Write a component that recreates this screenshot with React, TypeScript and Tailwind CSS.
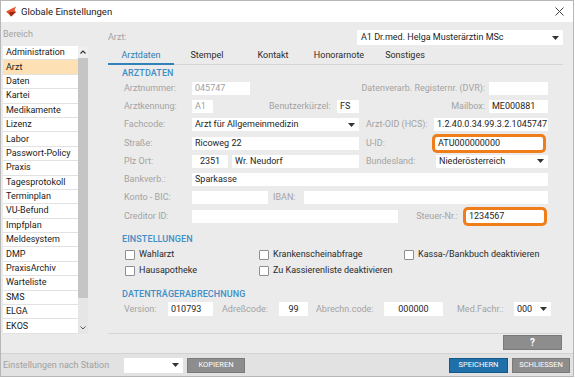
import React from "react";

type P = { className?: string; children?: React.ReactNode };

const items = [
  "Administration",
  "Arzt",
  "Daten",
  "Kartei",
  "Medikamente",
  "Lizenz",
  "Labor",
  "Passwort-Policy",
  "Praxis",
  "Tagesprotokoll",
  "Terminplan",
  "VU-Befund",
  "Impfplan",
  "Meldesystem",
  "DMP",
  "PraxisArchiv",
  "Warteliste",
  "SMS",
  "ELGA",
  "EKOS",
];

const tabs = ["Arztdaten", "Stempel", "Kontakt", "Honorarnote", "Sonstiges"];

function Caret() {
  return (
    <svg width="7" height="4" viewBox="0 0 7 4" className="shrink-0">
      <path d="M0 0h7L3.5 4z" fill="#333" />
    </svg>
  );
}

function Label({ className = "", children }: P) {
  return <div className={`shrink-0 whitespace-nowrap text-[#a3a3a3] ${className}`}>{children}</div>;
}

function Box({ className = "", children }: P) {
  return (
    <div className={`flex h-[13px] shrink-0 items-center whitespace-nowrap bg-white px-[3px] text-[#1e1e1e] ${className}`}>
      {children}
    </div>
  );
}

function Select({ className = "", children }: P) {
  return (
    <div
      className={`flex h-[13px] shrink-0 items-center justify-between whitespace-nowrap bg-white pl-[3px] pr-[4px] text-[#1e1e1e] ${className}`}
    >
      <span>{children}</span>
      <Caret />
    </div>
  );
}

function Row({ children }: P) {
  return <div className="ml-[2px] flex h-[18.3px] items-center">{children}</div>;
}

function Check({ className = "", children }: P) {
  return (
    <div className={`flex shrink-0 items-center gap-[4px] ${className}`}>
      <div className="h-[10px] w-[10px] rounded-[1px] border border-[#8e8e8e] bg-white" />
      <span className="whitespace-nowrap text-[#2a2a2a]">{children}</span>
    </div>
  );
}

function Heading({ className = "", children }: P) {
  return (
    <div className={`h-[11px] leading-[11px] font-medium tracking-[0.1px] text-[#3f8fc6] ${className}`}>
      {children}
    </div>
  );
}

function GrayButton({ className = "", children }: P) {
  return (
    <div
      className={`flex shrink-0 items-center justify-center border border-[#7a7a7a] bg-[#8d8d8d] text-[7.5px] text-white ${className}`}
    >
      {children}
    </div>
  );
}

export default function App() {
  return (
    <div className="h-[378px] w-[575px] overflow-hidden bg-white font-['Roboto',sans-serif] text-[9px] leading-none">
      <div className="flex h-[377px] w-[574px] flex-col border border-[#b7b7b7]">
        {/* title bar */}
        <div className="flex h-[21px] shrink-0 items-center bg-white pl-[4px] pr-[9px]">
          <svg width="12" height="11" viewBox="0 0 12 11">
            <path d="M1 5.5 L11 0.5 L9.5 4 L11 6 L6 10.5 Z" fill="#e4532a" />
            <path d="M4 6 L11 6 L6 10.5 Z" fill="#9c2a18" />
          </svg>
          <span className="ml-[4px] text-[9.5px] text-[#222]">Globale Einstellungen</span>
          <svg width="9" height="9" viewBox="0 0 9 9" className="ml-auto">
            <path d="M0.5 0.5 L8.5 8.5 M8.5 0.5 L0.5 8.5" stroke="#444" strokeWidth="1" />
          </svg>
        </div>

        {/* body */}
        <div className="flex h-[331px] shrink-0 bg-[#ebebeb]">
          {/* left column */}
          <div className="flex w-[88px] shrink-0 flex-col pl-[2px] pt-[7px]">
            <div className="h-[11px] leading-[11px] text-[#a3a3a3]">Bereich</div>
            <div className="mt-[6px] flex h-[288px]">
              <div className="flex w-[75px] flex-col">
                {items.map((it) => (
                  <div
                    key={it}
                    className={`flex h-[14.4px] items-center border-b border-[#e2e2e2] px-[3px] text-[#1a1a1a] ${
                      it === "Arzt" ? "bg-[#fde1b4]" : "bg-white"
                    }`}
                  >
                    {it}
                  </div>
                ))}
              </div>
              <div className="flex w-[10px] flex-col bg-[#e6e6e6]">
                <div className="flex h-[12px] items-center justify-center bg-[#efefef]">
                  <svg width="6" height="4" viewBox="0 0 6 4">
                    <path d="M0.5 3.5 L3 1 L5.5 3.5" stroke="#333" strokeWidth="1.2" fill="none" />
                  </svg>
                </div>
                <div className="h-[240px] bg-[#c5c5c5]" />
                <div className="flex-1" />
                <div className="flex h-[12px] items-center justify-center">
                  <svg width="6" height="4" viewBox="0 0 6 4">
                    <path d="M0.5 0.5 L3 3 L5.5 0.5" stroke="#555" strokeWidth="1" fill="none" />
                  </svg>
                </div>
              </div>
            </div>
          </div>

          {/* right column */}
          <div className="flex flex-1 flex-col pl-[19px] pr-[10px] pt-[8px]">
            <div className="flex h-[15px] items-center">
              <span className="text-[#a3a3a3]">Arzt:</span>
              <Select className="ml-auto h-[15px] w-[206px]">
                <span className="pl-[1px]">A1 Dr.med. Helga Musterärztin MSc</span>
              </Select>
            </div>

            <div className="mt-[4px] flex h-[16px] border-b border-[#d6d6d6]">
              {tabs.map((t, i) => (
                <div
                  key={t}
                  className={`-mb-px flex h-[16px] w-[66px] justify-center pt-[2px] ${
                    i === 0 ? "border-b-2 border-[#2f82ba] text-[#2f7db4]" : "text-[#2b2b2b]"
                  }`}
                >
                  {t}
                </div>
              ))}
            </div>

            {/* tab pane */}
            <div className="h-[269px] shrink-0 border-b border-[#d6d6d6] pl-[14px] pt-[3px]">
              <Heading>ARZTDATEN</Heading>

              <Row>
                <Label className="w-[68px]">Arztnummer:</Label>
                <Box className="w-[58px] !text-[#a0a0a0]">045747</Box>
                <Label className="w-[239px] pr-[4px] text-right">Datenverarb. Registernr. (DVR):</Label>
                <Box className="w-[59px]" />
              </Row>
              <Row>
                <Label className="w-[68px]">Arztkennung:</Label>
                <Box className="w-[21px] !text-[#a0a0a0]">A1</Box>
                <Label className="w-[124px] pl-[56px]">Benutzerkürzel:</Label>
                <Box className="w-[22px]">FS</Box>
                <Label className="w-[130px] pr-[4px] text-right">Mailbox:</Label>
                <Box className="w-[59px]">ME000881</Box>
              </Row>
              <Row>
                <Label className="w-[68px]">Fachcode:</Label>
                <Select className="w-[167px]">Arzt für Allgemeinmedizin</Select>
                <Label className="w-[75px] pl-[7px]">Arzt-OID (HCS):</Label>
                <Box className="w-[114px] pl-[3px] pr-0">1.2.40.0.34.99.3.2.1045747</Box>
              </Row>
              <Row>
                <Label className="w-[68px]">Straße:</Label>
                <Box className="w-[167px]">Ricoweg 22</Box>
                <Label className="w-[76px] pl-[7px]">U-ID:</Label>
                <Box className="w-[108px] rounded-[2px] ring-3 ring-[#ef7d1a]">ATU000000000</Box>
              </Row>
              <Row>
                <Label className="w-[68px]">Plz Ort:</Label>
                <Box className="w-[36px] justify-center">2351</Box>
                <Box className="ml-[4px] w-[127px]">Wr. Neudorf</Box>
                <Label className="w-[77px] pl-[7px]">Bundesland:</Label>
                <Select className="w-[112px]">Niederösterreich</Select>
              </Row>
              <Row>
                <Label className="w-[68px]">Bankverb.:</Label>
                <Box className="w-[356px]">Sparkasse</Box>
              </Row>
              <Row>
                <Label className="w-[68px]">Konto - BIC:</Label>
                <Box className="w-[76px]" />
                <Label className="w-[36px] pl-[5px]">IBAN:</Label>
                <Box className="w-[244px]" />
              </Row>
              <Row>
                <Label className="w-[68px]">Creditor ID:</Label>
                <Box className="w-[206px]" />
                <Label className="w-[68px] pr-[8px] text-right">Steuer-Nr.:</Label>
                <Box className="w-[78px] rounded-[2px] ring-3 ring-[#ef7d1a]">1234567</Box>
              </Row>

              <Heading className="mt-[9px]">EINSTELLUNGEN</Heading>
              <div className="ml-[3px] mt-[1.5px] flex h-[16px] items-center">
                <Check className="w-[134px]">Wahlarzt</Check>
                <Check className="w-[145px]">Krankenscheinabfrage</Check>
                <Check>Kassa-/Bankbuch deaktivieren</Check>
              </div>
              <div className="ml-[3px] flex h-[16px] items-center">
                <Check className="w-[134px]">Hausapotheke</Check>
                <Check className="w-[145px]">Zu Kassierenliste deaktivieren</Check>
              </div>

              <Heading className="mt-[10.5px]">DATENTRÄGERABRECHNUNG</Heading>
              <div className="ml-[2px] mt-[1px] flex h-[16px] items-center">
                <Label className="w-[44px]">Version:</Label>
                <Box className="h-[14px] w-[45px]">010793</Box>
                <Label className="w-[66px] pl-[9px]">Adreßcode:</Label>
                <Box className="h-[14px] w-[29px] justify-center">99</Box>
                <Label className="w-[76px] pl-[8px]">Abrechn.code:</Label>
                <Box className="h-[14px] w-[59px] justify-center">000000</Box>
                <Label className="w-[71px] pl-[14px]">Med.Fachr.:</Label>
                <Select className="h-[14px] w-[37px]">000</Select>
              </div>
            </div>

            <div className="mt-[1px] flex justify-end pr-[1px]">
              <GrayButton className="h-[15px] w-[59px] text-[10px] font-bold">?</GrayButton>
            </div>
          </div>
        </div>

        {/* bottom bar */}
        <div className="flex h-[23px] shrink-0 items-center border-t border-[#d2d2d2] bg-[#e2e2e2] pl-[2px] pr-[3px]">
          <span className="w-[121px] text-[#a0a0a0]">Einstellungen nach Station</span>
          <Select className="h-[15px] w-[59px]" />
          <GrayButton className="ml-[4px] h-[15px] w-[58px]">KOPIEREN</GrayButton>
          <div className="ml-auto flex h-[15px] w-[59px] items-center justify-center border border-[#15598a] bg-[#1f70a8] text-[7.5px] text-white">
            SPEICHERN
          </div>
          <GrayButton className="ml-[4px] h-[15px] w-[58px]">SCHLIESSEN</GrayButton>
        </div>
      </div>
    </div>
  );
}
